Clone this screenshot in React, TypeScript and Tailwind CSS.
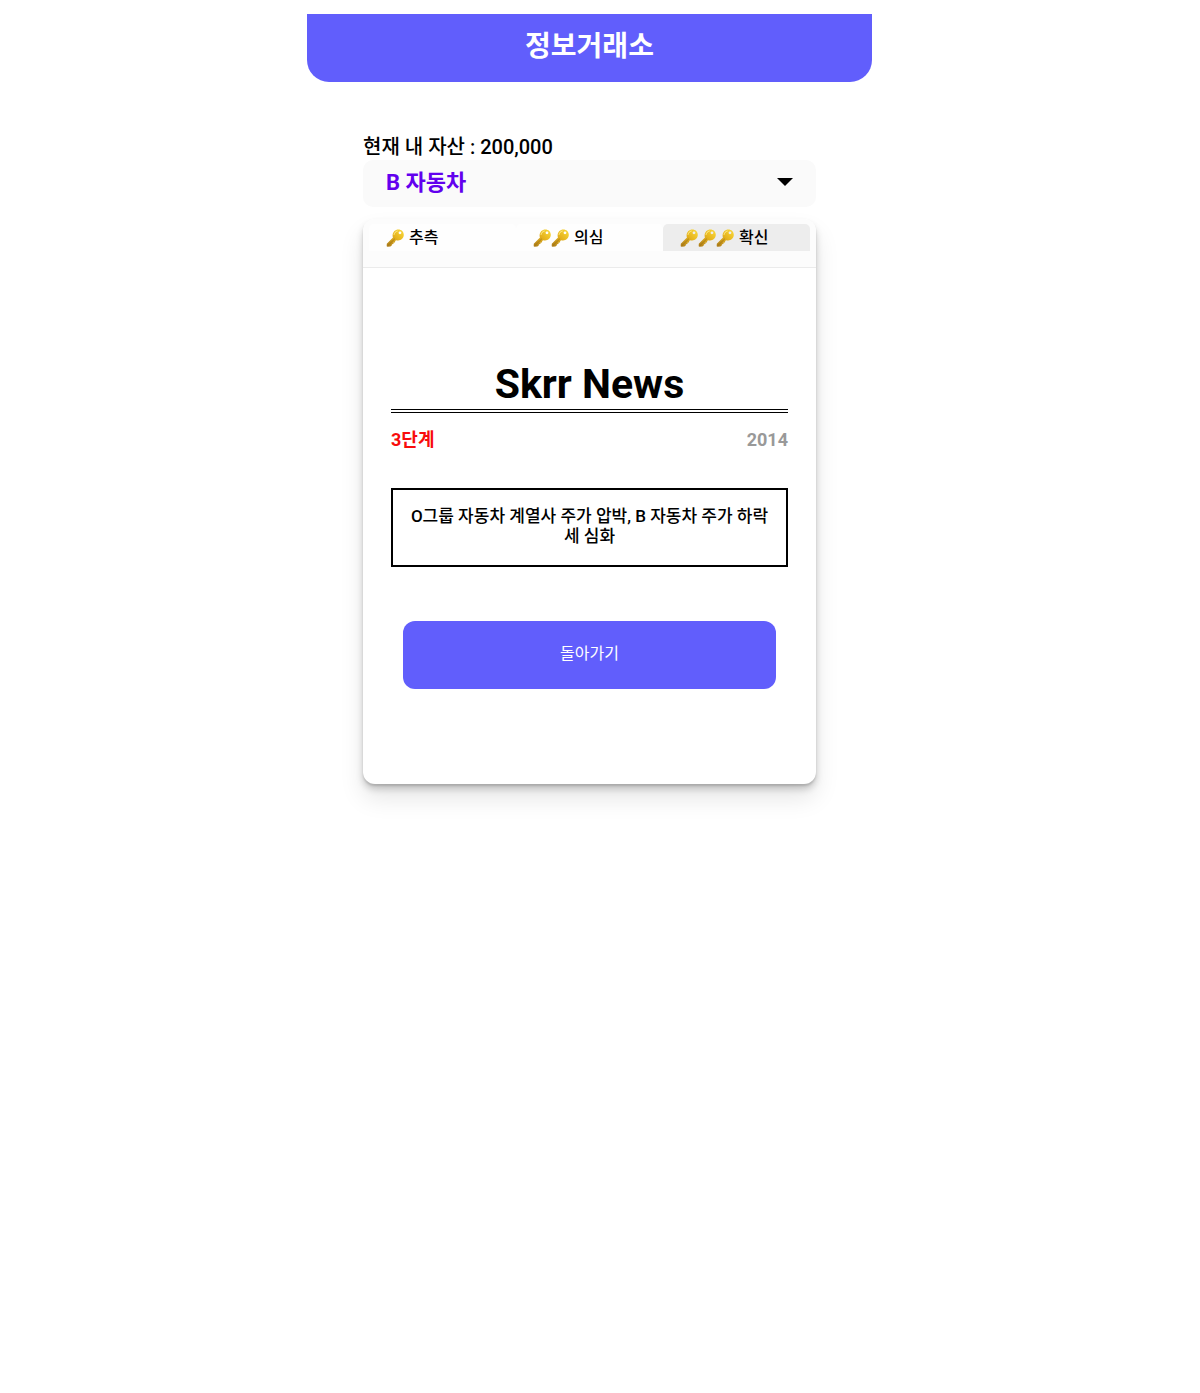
import { useState } from "react";

const companies = ["A 전자", "B 자동차", "C 식품"];

const levels = [
  { id: 1, label: "추측" },
  { id: 2, label: "의심" },
  { id: 3, label: "확신" },
];

function KeyIcon() {
  return (
    <svg viewBox="0 0 18 18" className="h-[18px] w-[18px]" aria-hidden="true">
      <defs>
        <linearGradient id="keyGold" x1="1" y1="0" x2="0" y2="1">
          <stop offset="0" stopColor="#fbdc3c" />
          <stop offset="0.45" stopColor="#e6b41e" />
          <stop offset="1" stopColor="#a9791a" />
        </linearGradient>
      </defs>
      <path
        fill="url(#keyGold)"
        fillRule="evenodd"
        d="M12.3.5c3.200 0 5.500 2.200 5.500 5.300 0 3.300-2.600 5.700-5.700 5.700-.8 0-1.400-.1-2-.3L9.200 12.100l-.2 1.300-1.400.2-.2 1.300-1.400.3-.3 1.200-1.300 1.100-2.900.3-.8-.6.1-2.400L7 8.600c-.3-.7-.5-1.500-.4-2.300C6.800 2.900 9.300.5 12.300.5zM14 2.400a1.400 1.400 0 1 0 0 2.800 1.400 1.400 0 0 0 0-2.800z"
      />
      <path d="M8.800 9.800 2 16.500" stroke="#94690f" strokeWidth="0.600" fill="none" />
      <path d="M8 5.800c.3-2 1.700-3.500 3.600-3.800" stroke="#fff3a0" strokeWidth="0.900" fill="none" />
    </svg>
  );
}

export default function App() {
  const [company, setCompany] = useState("B 자동차");
  const [level, setLevel] = useState(3);

  return (
    <div className="pt-[14px] pr-[21px] pb-14 font-[Roboto,'Noto_Sans_CJK_KR',sans-serif] text-black">
      <main className="mx-auto max-w-[565px]">
        <header className="flex h-[68px] justify-center rounded-b-[22px] bg-[#615efc] pt-[15px]">
          <h1 className="text-[28px] leading-9 font-bold text-white">정보거래소</h1>
        </header>

        <div className="px-14 pt-[53px]">
          <p className="text-[20px] leading-[25px] font-medium">현재 내 자산 : 200,000</p>

          <div className="relative">
            <select
              aria-label="종목"
              value={company}
              onChange={(e) => setCompany(e.target.value)}
              className="h-[47px] w-full appearance-none rounded-[10px] bg-[#fafafa] px-[23px] pb-[2px] text-[22px] font-bold text-[#6200ee]"
            >
              {companies.map((c) => (
                <option key={c}>{c}</option>
              ))}
            </select>
            <svg viewBox="0 0 16 8" className="pointer-events-none absolute top-[18px] right-[23px] h-2 w-4" aria-hidden="true">
              <path d="M0 0h16L8 8z" />
            </svg>
          </div>

          <section className="mt-3 rounded-xl bg-white shadow-[0_2px_2px_rgba(0,0,0,0.12),0_5px_7px_rgba(0,0,0,0.18),0_14px_24px_rgba(0,0,0,0.1)]">
            <div role="tablist" className="flex rounded-t-xl border-b border-[#ebebeb] bg-[#fcfcfc] px-[6px] pt-[5px] pb-4">
              {levels.map(({ id, label }) => (
                <button
                  key={id}
                  role="tab"
                  aria-selected={level === id}
                  onClick={() => setLevel(id)}
                  className={`flex h-[27px] flex-1 items-center rounded-t-[5px] pl-[17px] text-[16px] leading-5 font-medium ${
                    level === id ? "bg-[#ededed]" : "bg-[#fefefe]"
                  }`}
                >
                  {Array.from({ length: id }, (_, i) => (
                    <KeyIcon key={i} />
                  ))}
                  <span className="ml-[5px]">{label}</span>
                </button>
              ))}
            </div>

            <article className="px-7 pt-[92px] pb-[95px]">
              <h2 className="border-b-4 border-double border-black text-center text-[41px] leading-[49px] font-bold">
                Skrr News
              </h2>
              <div className="mt-[15px] flex justify-between text-[18px] leading-6 font-bold">
                <span className="text-[#f80c0c]">{level}단계</span>
                <span className="text-[#999999]">2014</span>
              </div>
              <p className="mt-9 border-2 border-black px-4 pt-4 pb-[19px] text-center text-[17px] leading-5 font-medium break-all">
                O그룹 자동차 계열사 주가 압박, B 자동차 주가 하락세 심화
              </p>
              <div className="mt-[54px] px-3">
                <button className="h-[68px] w-full rounded-xl bg-[#615efc] pb-[2px] text-[16px] text-white">돌아가기</button>
              </div>
            </article>
          </section>
        </div>
      </main>
    </div>
  );
}
